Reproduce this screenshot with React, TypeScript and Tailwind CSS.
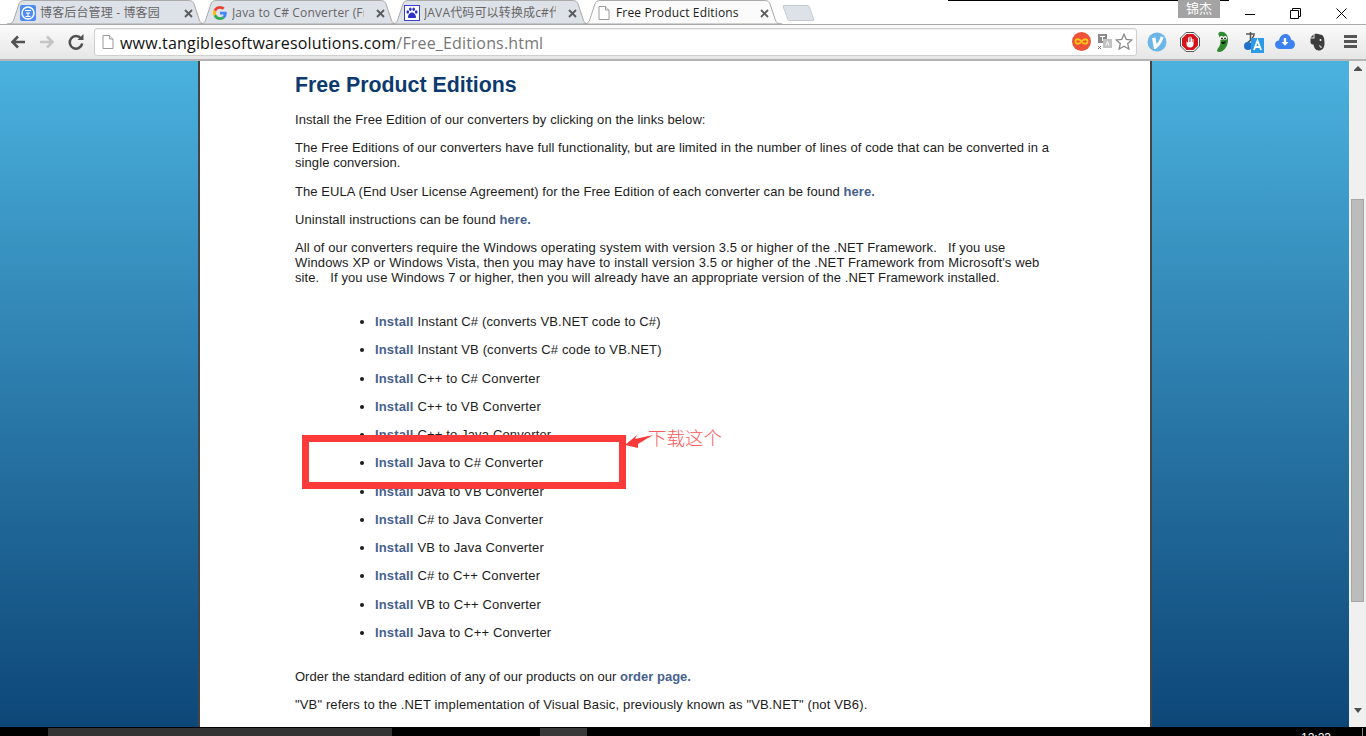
import React from 'react';

const cjk = '"Liberation Sans", "Noto Sans CJK SC", sans-serif';

const products = [
  'Instant C# (converts VB.NET code to C#)',
  'Instant VB (converts C# code to VB.NET)',
  'C++ to C# Converter',
  'C++ to VB Converter',
  'C++ to Java Converter',
  'Java to C# Converter',
  'Java to VB Converter',
  'C# to Java Converter',
  'VB to Java Converter',
  'C# to C++ Converter',
  'VB to C++ Converter',
  'Java to C++ Converter',
];

function CloseX() {
  return (
    <svg width="9" height="9" viewBox="0 0 9 9" className="shrink-0">
      <path d="M1 1 L8 8 M8 1 L1 8" stroke="#5a5a5a" strokeWidth="1.8" />
    </svg>
  );
}

function PageIcon({ size = 14 }: { size?: number }) {
  return (
    <svg width={size * 0.86} height={size} viewBox="0 0 12 14" className="shrink-0">
      <path d="M1 .5 H7.5 L11 4 V13.5 H1 Z" fill="#fff" stroke="#9a9a9a" />
      <path d="M7.5 .5 V4 H11" fill="#eee" stroke="#9a9a9a" />
    </svg>
  );
}

function TabShape({ active }: { active?: boolean }) {
  return (
    <svg className="absolute inset-0 h-full w-full" viewBox="0 0 200 24" preserveAspectRatio="none">
      <path
        d="M0 24 C5 24 6 22 7 19 L12 4 C13 1.500 14 .5 18 .5 H182 C186 .5 187 1.500 188 4 L193 19 C194 22 195 24 200 24 Z"
        fill={active ? '#fbfbfb' : '#dde1e8'}
        stroke="#a9a9a9"
        vectorEffect="non-scaling-stroke"
      />
    </svg>
  );
}

function Tab({
  title,
  icon,
  active,
}: {
  title: string;
  icon: React.ReactNode;
  active?: boolean;
}) {
  return (
    <div className="relative h-[24px] w-[199px] shrink-0 -mr-[7px]">
      <TabShape active={active} />
      <div className="absolute inset-0 flex items-center pl-[13px] pr-[13px] pt-[2px]">
        <span className="flex w-[16px] shrink-0 justify-center">{icon}</span>
        <span
          className={`ml-[4px] mr-[12px] min-w-0 flex-1 overflow-hidden whitespace-nowrap text-[12px] tracking-[0.15px] ${
            active ? 'text-[#222]' : 'text-[#666]'
          }`}
          style={{ fontFamily: '"Open Sans", "Noto Sans CJK SC", sans-serif' }}
        >
          {title}
        </span>
        <CloseX />
      </div>
    </div>
  );
}

function CnblogsIcon() {
  return (
    <svg width="16" height="16" viewBox="0 0 16 16">
      <rect width="16" height="16" rx="2" fill="#4d8cf5" />
      <circle cx="8" cy="8" r="6" fill="none" stroke="#fff" strokeWidth="1.500" />
      <path d="M5 5.500 H11 M6 8 H10 M8 8 V11.500 M5.500 11.500 H10.500" stroke="#fff" strokeWidth="1.200" fill="none" />
    </svg>
  );
}

function GoogleIcon() {
  return (
    <svg width="14" height="14" viewBox="0 0 48 48">
      <path fill="#EA4335" d="M24 9.500c3.500 0 6.700 1.300 9.100 3.500l6.800-6.800C35.800 2.400 30.300 0 24 0 14.600 0 6.500 5.400 2.600 13.200l7.900 6.100C12.400 13.700 17.700 9.500 24 9.500z" />
      <path fill="#4285F4" d="M47 24.500c0-1.600-.1-3.100-.4-4.500H24v9h12.900c-.6 3-2.200 5.400-4.700 7.100l7.600 5.900C44.300 37.900 47 31.800 47 24.500z" />
      <path fill="#FBBC05" d="M10.500 28.700c-.5-1.500-.8-3-.8-4.700s.3-3.200.8-4.700l-7.900-6.100C.9 16.500 0 20.100 0 24s.9 7.500 2.600 10.800l7.900-6.100z" />
      <path fill="#34A853" d="M24 48c6.500 0 11.900-2.100 15.800-5.800l-7.600-5.900c-2.100 1.400-4.900 2.300-8.200 2.300-6.300 0-11.600-4.200-13.500-9.900l-7.900 6.100C6.500 42.600 14.600 48 24 48z" />
    </svg>
  );
}

function BaiduIcon() {
  return (
    <svg width="16" height="16" viewBox="0 0 16 16">
      <rect x=".5" y=".5" width="15" height="15" fill="#fff" stroke="#3a3fd0" />
      <ellipse cx="3.800" cy="7" rx="1.300" ry="1.800" fill="#2b32c8" />
      <ellipse cx="6.300" cy="4.200" rx="1.300" ry="1.800" fill="#2b32c8" />
      <ellipse cx="9.700" cy="4.200" rx="1.300" ry="1.800" fill="#2b32c8" />
      <ellipse cx="12.200" cy="7" rx="1.300" ry="1.800" fill="#2b32c8" />
      <path d="M8 7.500 C5.800 7.500 4 10 4 12 C4 13.500 6 13 8 13 C10 13 12 13.500 12 12 C12 10 10.200 7.500 8 7.500 Z" fill="#2b32c8" />
    </svg>
  );
}

function NavIcons() {
  return (
    <div className="flex items-center">
      <svg width="18" height="16" viewBox="0 0 18 16" className="ml-[9px]">
        <path d="M16 8 H4 M9 2.500 L3.500 8 L9 13.500" fill="none" stroke="#515151" strokeWidth="2.600" />
      </svg>
      <svg width="18" height="16" viewBox="0 0 18 16" className="ml-[11px]">
        <path d="M2 8 H14 M9 2.500 L14.500 8 L9 13.500" fill="none" stroke="#c4c4c4" strokeWidth="2.600" />
      </svg>
      <svg width="18" height="18" viewBox="0 0 18 18" className="ml-[11px]">
        <path d="M14 5.500 A6.300 6.300 0 1 0 15.200 10.500" fill="none" stroke="#505050" strokeWidth="2.500" />
        <path d="M10.500 7 H16.500 V1 Z" fill="#505050" />
      </svg>
    </div>
  );
}

function OmniboxIcons() {
  return (
    <div className="flex items-center">
      <svg width="19" height="19" viewBox="0 0 19 19">
        <circle cx="9.500" cy="9.500" r="9.500" fill="#ee5238" />
        <path d="M9.500 9.500 C7.500 6.500 3.500 6.500 3.500 9.500 C3.500 12.500 7.500 12.500 9.500 9.500 C11.500 6.500 15.500 6.500 15.500 9.500 C15.500 12.500 11.500 12.500 9.500 9.500 Z" fill="none" stroke="#fcc419" strokeWidth="1.800" />
      </svg>
      <svg width="16" height="17" viewBox="0 0 16 17" className="ml-[6px]">
        <rect x="1" y="1" width="9" height="9" fill="#8a8a8a" />
        <rect x="6" y="6" width="9" height="9" fill="#c2c2c2" />
        <path d="M3 3.500 H8 M5.500 3 V8 M9 12.500 L10.500 8.500 L12 12.500" stroke="#fff" fill="none" />
        <path d="M1 13 L4 16 M4 13 L1 16" stroke="#777" />
      </svg>
      <svg width="18" height="17" viewBox="0 0 18 17" className="ml-[2px]">
        <path d="M9 1.200 L11.300 6.300 L16.800 6.900 L12.700 10.600 L13.900 16 L9 13.200 L4.100 16 L5.300 10.600 L1.200 6.900 L6.700 6.300 Z" fill="#fff" stroke="#8a8a8a" strokeWidth="1.300" />
      </svg>
    </div>
  );
}

function ExtensionIcons() {
  return (
    <div className="ml-[10px] flex items-center">
      {/* V */}
      <svg width="20" height="20" viewBox="0 0 20 20">
        <circle cx="10" cy="10" r="9.500" fill="#6bb5e8" />
        <path d="M5 6 L8.500 5.500 L9.500 12 C11.500 10 13 7.500 13.500 4.500 L16.500 5 C16 9 12.500 14 8.500 17 L7 17 Z" fill="#fff" />
      </svg>
      {/* adblock */}
      <svg width="20" height="20" viewBox="0 0 20 20" className="ml-[13px]">
        <path d="M6 .5 H14 L19.500 6 V14 L14 19.500 H6 L.5 14 V6 Z" fill="#fff" stroke="#555" />
        <path d="M6.600 2 H13.400 L18 6.600 V13.400 L13.400 18 H6.600 L2 13.400 V6.600 Z" fill="#d4131b" />
        <path d="M6.500 9 V12 C6.500 14.500 8 15.500 10 15.500 C12.500 15.500 13.500 14 13.500 12 V7 H12.500 V10 H12 V5.500 H11 V10 H10.500 V4.500 H9.500 V10 H9 V5.500 H8 V11 Z" fill="#fff" />
      </svg>
      {/* pickle */}
      <svg width="16" height="22" viewBox="0 0 16 22" className="ml-[14px]">
        <path d="M6 1 C10 0 14 3 14 9 C14 15 10 21 5 21 C2 21 3 18 5 16 C7 13 7 8 5 5 C4 3 4 1.500 6 1 Z" fill="#2f8a2f" />
        <circle cx="7.500" cy="7" r="2" fill="#fff" />
        <circle cx="11" cy="7" r="2" fill="#fff" />
        <circle cx="8" cy="7.500" r=".9" fill="#111" />
        <circle cx="11" cy="7.500" r=".9" fill="#111" />
        <path d="M7 11 C8 14 11 13.500 12 10.500 Z" fill="#111" />
      </svg>
      {/* translate */}
      <svg width="22" height="22" viewBox="0 0 22 22" className="ml-[12px]">
        <path d="M4 3 H13 M8.500 1 V10 M5 12 C8 10 11 7 12 4" stroke="#555" strokeWidth="1.500" fill="none" />
        <circle cx="6" cy="15" r="4" fill="#2170c9" />
        <rect x="9" y="7" width="13" height="15" fill="#2b9be8" />
        <path d="M12 19 L15.500 9.500 L19 19 M13.200 16 H17.800" stroke="#fff" strokeWidth="1.800" fill="none" />
      </svg>
      {/* cloud */}
      <svg width="20" height="15" viewBox="0 0 20 15" className="ml-[11px]">
        <path d="M5 15 C2 15 0 13 0 10.500 C0 8 2 6.500 4 6.500 C4.500 3 7 0 10.500 0 C13.500 0 16 2.500 16 5.500 C18.500 6 20 8 20 10.500 C20 13 18 15 15.500 15 Z" fill="#3b82f0" />
        <path d="M8.800 4 H11.200 V8 H13.500 L10 11.800 L6.500 8 H8.800 Z" fill="#fff" />
      </svg>
      {/* elephant */}
      <svg width="15" height="18" viewBox="0 0 15 18" className="ml-[15px]">
        <path d="M3.500 1.500 L0.500 4.500 H3.500 Z" fill="#3d3d3d" />
        <path d="M4.500 1 V5.500 H0.500 V9 C0.500 11 2 11.500 3.500 11.500 C4 14 5 17.500 9 17.500 C12 17.500 14.500 15.500 14.500 10 C14.500 5 13.500 1.500 10 1.500 C8.500 1 6 .5 4.500 1 Z" fill="#3d3d3d" />
        <circle cx="10.500" cy="7" r="1" fill="#fff" />
        <path d="M9 13 C10 12.500 11.500 13 11 15" stroke="#fff" fill="none" />
      </svg>
      {/* menu */}
      <div className="ml-[19px] flex w-[13px] flex-col gap-[2px]">
        <div className="h-[3px] bg-[#555]" />
        <div className="h-[3px] bg-[#555]" />
        <div className="h-[3px] bg-[#555]" />
      </div>
    </div>
  );
}

function TitleBar() {
  return (
    <div className="relative flex h-[25px] items-start overflow-hidden border-b border-[#a9a9a9] bg-white pl-[7px]">
      <Tab title="博客后台管理 - 博客园" icon={<CnblogsIcon />} />
      <Tab title="Java to C# Converter (Free" icon={<GoogleIcon />} />
      <Tab title="JAVA代码可以转换成c#代码" icon={<BaiduIcon />} />
      <Tab title="Free Product Editions" icon={<PageIcon />} active />
      <div className="ml-[10px] mt-[5px] h-[16px] w-[27px] skew-x-[20deg] rounded-[2px] border border-[#c5c9d0] bg-[#dde1e8]" />
      <div className="absolute right-[137px] top-0 h-[1px] w-[281px] bg-black" />
      <div
        className="absolute left-[1178px] top-0 flex h-[18px] w-[42px] items-center justify-center bg-[#a3a3a3] text-[13px] text-white"
        style={{ fontFamily: cjk }}
      >
        锦杰
      </div>
      <div className="absolute right-[19px] top-[8px] flex items-center gap-[35px]">
        <div className="h-[1px] w-[10px] translate-y-[1px] bg-black" />
        <svg width="11" height="11" viewBox="0 0 11 11">
          <path d="M.5 2.500 H8.500 V10.500 H.5 Z M2.500 2.500 V.5 H10.500 V8.500 H8.500" fill="none" stroke="#000" />
        </svg>
        <svg width="11" height="11" viewBox="0 0 11 11">
          <path d="M.5 .5 L10.500 10.500 M10.500 .5 L.5 10.500" stroke="#000" />
        </svg>
      </div>
    </div>
  );
}

function Toolbar() {
  return (
    <div className="flex h-[36px] items-center border-b-2 border-[#b4b4b4] bg-gradient-to-b from-[#fbfbfb] to-[#e6e6e6] pb-[1px]">
      <NavIcons />
      <div className="ml-[9px] flex h-[28px] w-[1043px] items-center rounded-[3px] border border-[#cfcfcf] bg-white pl-[7px] pr-[3px] shadow-[inset_0_1px_1px_#eee]">
        <PageIcon />
        <div
          className="ml-[6px] flex-1 translate-y-[1px] whitespace-nowrap text-[16px] tracking-[0.17px] text-[#111]"
          style={{ fontFamily: '"Open Sans", sans-serif' }}
        >
          www.tangiblesoftwaresolutions.com<span className="text-[#777]">/Free_Editions.html</span>
        </div>
        <OmniboxIcons />
      </div>
      <ExtensionIcons />
    </div>
  );
}

function Link({ children }: { children: React.ReactNode }) {
  return <span className="font-bold text-[#47618f]">{children}</span>;
}

function PageBody() {
  return (
    <div className="ml-[198px] h-full w-[954px] overflow-hidden border-x-2 border-[#444] bg-white pl-[95px] text-[13px] leading-[15px] tracking-[0.08px] text-[#1c1c1c] [font-family:'Liberation_Sans',Arial,sans-serif]">
      <h1 className="pt-[13px] text-[21.330px] font-bold leading-[22px] tracking-normal text-[#0c3a6e]">Free Product Editions</h1>
      <p className="mt-[16px]">Install the Free Edition of our converters by clicking on the links below:</p>
      <p className="mt-[13px]">
        The Free Editions of our converters have full functionality, but are limited in the number of lines of code that can be converted in a
        <br />
        single conversion.
      </p>
      <p className="mt-[14px]">
        The EULA (End User License Agreement) for the Free Edition of each converter can be found <Link>here.</Link>
      </p>
      <p className="mt-[13px]">
        Uninstall instructions can be found <Link>here.</Link>
      </p>
      <div className="mt-[13px] whitespace-pre">
        <div className="tracking-[0.105px]">All of our converters require the Windows operating system with version 3.5 or higher of the .NET Framework.   If you use</div>
        <div className="tracking-[0.136px]">Windows XP or Windows Vista, then you may have to install version 3.5 or higher of the .NET Framework from Microsoft's web</div>
        <div>site.   If you use Windows 7 or higher, then you will already have an appropriate version of the .NET Framework installed.</div>
      </div>
      <ul className="mt-[29px] list-disc pl-[80px] tracking-[0.15px]">
        {products.map((name) => (
          <li key={name} className="mb-[13.250px]">
            <Link>Install</Link> {name}
          </li>
        ))}
      </ul>
      <p className="mt-[29px] tracking-[0.01px]">
        Order the standard edition of any of our products on our <Link>order page.</Link>
      </p>
      <p className="mt-[13px] tracking-[0.14px]">"VB" refers to the .NET implementation of Visual Basic, previously known as "VB.NET" (not VB6).</p>
    </div>
  );
}

function Annotation() {
  return (
    <>
      <div className="absolute left-[302px] top-[374px] h-[54px] w-[324px] border-[7px] border-[#fd3a3a]" />
      <svg className="absolute left-[624px] top-[373px]" width="30" height="16" viewBox="0 0 30 16">
        <path d="M1 11 L13 1 L11 5 L29 1 L14 10 L14 14 Z" fill="#fd3a3a" />
      </svg>
      <div
        className="absolute left-[648px] top-[364px] whitespace-nowrap text-[18.500px] font-light leading-[24px] text-[#fb5a5a]"
        style={{ fontFamily: '"Noto Sans CJK SC", sans-serif' }}
      >
        下载这个
      </div>
    </>
  );
}

function ScrollBar() {
  return (
    <div className="relative flex h-full w-[17px] flex-col items-center bg-[#f0f0f0]">
      <svg className="mt-[5px]" width="8" height="5" viewBox="0 0 8 5">
        <path d="M4 0 L8 4 V5 H0 V4 Z" fill="#505050" />
      </svg>
      <div className="mt-[128px] h-[403px] w-[13px] border border-[#a6a6a6] bg-[#bcbcbc]" />
      <svg className="mt-auto mb-[14px]" width="8" height="5" viewBox="0 0 8 5">
        <path d="M0 0 H8 L4 5 Z" fill="#505050" />
      </svg>
    </div>
  );
}

function TaskBar() {
  return (
    <div className="relative h-[9px] overflow-hidden bg-black">
      <div className="flex h-full pt-[1px]">
        <div className="ml-[48px] w-[344px] bg-[#333]" />
        <div className="ml-[148px] w-[47px] bg-[#383838]" />
      </div>
      <div className="absolute left-[1301px] top-[4px] text-[12px] leading-[14px] text-white [font-family:'Liberation_Sans',sans-serif]">
        12:23
      </div>
      <div className="absolute left-[1362px] top-[1px] h-[8px] w-[1px] bg-[#888]" />
    </div>
  );
}

export default function App() {
  return (
    <div className="flex h-[736px] w-[1366px] flex-col overflow-hidden bg-white">
      <TitleBar />
      <Toolbar />
      <div className="flex h-[666px] min-h-0">
        <div className="relative h-full flex-1 bg-gradient-to-b from-[#4bb2df] to-[#0d4778]">
          <PageBody />
          <Annotation />
        </div>
        <ScrollBar />
      </div>
      <TaskBar />
    </div>
  );
}
